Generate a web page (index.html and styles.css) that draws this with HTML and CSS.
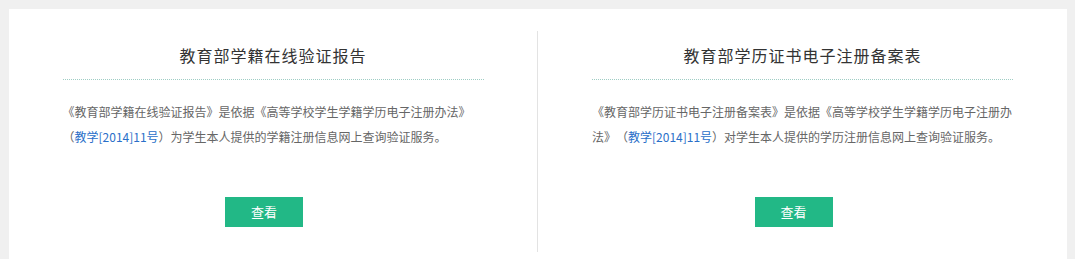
FILE: index.html
```html
<!DOCTYPE html>
<html lang="zh-CN">
<head>
<meta charset="utf-8">
<title>学籍学历验证</title>
<link rel="stylesheet" href="styles.css">
</head>
<body>
<div class="wrap">
  <section class="col">
    <div class="inner">
      <h2 class="title">教育部学籍在线验证报告</h2>
      <p class="desc"><span>《教育部学籍在线验证报告》是依据《高等学校学生学籍学历电子注册办法》</span><span>（</span><a class="link" href="#">教学[2014]11号</a><span>）为学生本人提供的学籍注册信息网上查询验证服务。</span></p>
      <div class="actions"><a class="btn" href="#">查看</a></div>
    </div>
  </section>
  <section class="col col-right">
    <div class="inner">
      <h2 class="title">教育部学历证书电子注册备案表</h2>
      <p class="desc"><span>《教育部学历证书电子注册备案表》是依据《高等学校学生学籍学历电子注册办</span><span>法》（</span><a class="link" href="#">教学[2014]11号</a><span>）对学生本人提供的学历注册信息网上查询验证服务。</span></p>
      <div class="actions"><a class="btn" href="#">查看</a></div>
    </div>
  </section>
</div>
</body>
</html>
```

FILE: styles.css
```css
html, body {
  margin: 0;
  padding: 0;
}
body {
  background: #f0f0f0;
  padding: 9px 8px 0 9px;
  font-family: "Noto Sans CJK SC", "Liberation Sans", sans-serif;
}
.wrap {
  background: #fff;
  display: grid;
  grid-template-columns: 528px 530px;
  padding: 22px 0 7px;
}
.col {
  height: 221px;
}
.col-right {
  border-left: 1px solid #e3e3e3;
}
.inner {
  width: 421px;
  margin: 0 auto;
}
.col-right .inner {
  margin-left: 54px;
}
.title {
  margin: 0;
  padding: 12px 0 12px;
  font-size: 16px;
  line-height: 24px;
  font-weight: normal;
  color: #333;
  letter-spacing: 1px;
  text-align: center;
  border-bottom: 1px dotted #9fcdc4;
}
.desc {
  margin: 19px 0 0;
  font-size: 12px;
  line-height: 25px;
  color: #666;
  height: 50px;
  text-spacing-trim: space-all;
  font-feature-settings: "halt" 0, "chws" 0;
}
.link {
  color: #2a6fc9;
  text-decoration: none;
}
.actions {
  display: flex;
  justify-content: center;
  margin-top: 48px;
  padding-right: 18px;
}
.btn {
  display: block;
  width: 78px;
  height: 30px;
  line-height: 30px;
  background: #22b886;
  color: #fff;
  font-size: 13px;
  text-align: center;
  text-decoration: none;
}
```
